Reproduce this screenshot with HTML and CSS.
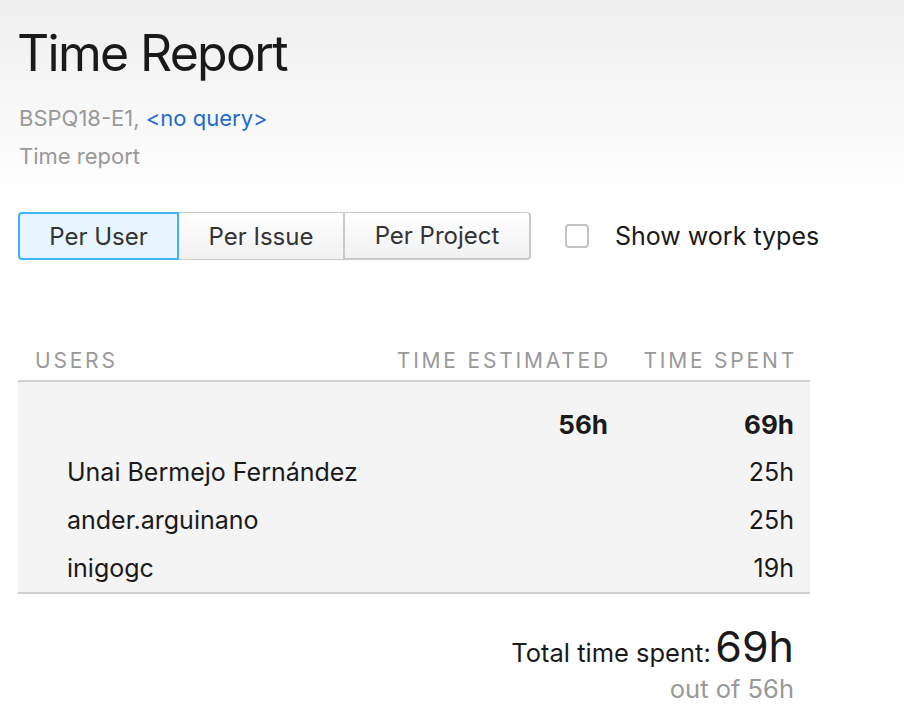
FILE: index.html
```html
<!DOCTYPE html>
<html lang="en">
<head>
<meta charset="utf-8">
<title>Time Report</title>
<link rel="stylesheet" href="styles.css">
</head>
<body>
<div class="page">
  <header class="head">
    <h1 class="title">Time Report</h1>
    <div class="meta">BSPQ18-E1, <a class="query" href="#">&lt;no query&gt;</a></div>
    <div class="sub">Time report</div>
  </header>

  <div class="controls">
    <div class="seg">
      <button class="seg-btn active">Per User</button>
      <button class="seg-btn">Per Issue</button>
      <button class="seg-btn">Per Project</button>
    </div>
    <label class="check">
      <span class="box"></span>
      <span class="check-label">Show work types</span>
    </label>
  </div>

  <div class="table">
    <div class="thead">
      <div class="th">Users</div>
      <div class="th num">Time Estimated</div>
      <div class="th num">Time Spent</div>
    </div>
    <div class="tbody">
      <div class="row total">
        <div class="cell"></div>
        <div class="cell num">56h</div>
        <div class="cell num">69h</div>
      </div>
      <div class="row">
        <div class="cell name">Unai Bermejo Fernández</div>
        <div class="cell num"></div>
        <div class="cell num">25h</div>
      </div>
      <div class="row">
        <div class="cell name">ander.arguinano</div>
        <div class="cell num"></div>
        <div class="cell num">25h</div>
      </div>
      <div class="row">
        <div class="cell name">inigogc</div>
        <div class="cell num"></div>
        <div class="cell num">19h</div>
      </div>
    </div>
  </div>

  <div class="summary">
    <div class="sum-line"><span class="sum-label">Total time spent:</span> <span class="sum-value">69h</span></div>
    <div class="sum-out">out of 56h</div>
  </div>
</div>
</body>
</html>
```

FILE: styles.css
```css
html, body {
  margin: 0;
  padding: 0;
}
body {
  font-family: Inter, "Noto Sans", "Liberation Sans", sans-serif;
  color: #1a1a1a;
  background: linear-gradient(to bottom, #efefef 0px, #ffffff 200px) no-repeat;
  background-color: #fff;
  min-height: 726px;
  white-space: nowrap;
}
.page {
  width: 792px;
  padding: 0 0 0 18px;
}
.head {
  padding-left: 1px;
  padding-top: 22px;
}
.title {
  margin: 0;
  font-size: 50px;
  font-weight: 400;
  line-height: 62px;
  letter-spacing: -1.7px;
  margin-left: -2px;
}
.meta {
  margin-top: 20px;
  font-size: 22px;
  line-height: 28px;
  color: #999;
}
.query {
  color: #1f6ad1;
  text-decoration: none;
}
.sub {
  margin-top: 10px;
  font-size: 22px;
  line-height: 28px;
  color: #999;
}
.controls {
  margin-top: 42px;
  display: flex;
  align-items: center;
  gap: 34px;
}
.seg {
  display: flex;
  flex: none;
  height: 48px;
}
.seg-btn {
  font-family: inherit;
  font-size: 24px;
  color: #333;
  background: linear-gradient(to bottom, #ffffff, #f1f1f1);
  border: 1px solid #c9c9c9;
  border-left-width: 0;
  padding: 0;
  height: 48px;
  margin: 0;
}
.seg-btn:nth-child(1) { width: 161px; border-left-width: 2px; border-radius: 4px 0 0 4px; }
.seg-btn:nth-child(2) { width: 165px; }
.seg-btn:nth-child(3) { width: 187px; border-radius: 0 4px 4px 0; border-width: 1px 2px 2px 1px; }
.seg-btn.active {
  background: #e6f5fe;
  border: 2px solid #3fb6f4;
}
.check {
  display: flex;
  flex: none;
  align-items: center;
  gap: 26px;
}
.box {
  flex: none;
  width: 20px;
  height: 20px;
  border: 2px solid #c4c4c4;
  border-radius: 4px;
  background: #fff;
}
.check-label {
  font-size: 25px;
  color: #1a1a1a;
}
.table {
  margin-top: 80px;
}
.thead, .row {
  display: grid;
  grid-template-columns: 1fr 220px 186px;
  padding-right: 16px;
}
.thead {
  height: 40px;
  align-items: center;
  border-bottom: 2px solid #cfcfcf;
}
.th {
  font-size: 21px;
  text-transform: uppercase;
  letter-spacing: 2.8px;
  color: #999;
  padding-left: 17px;
}
.th.num {
  padding-left: 0;
  margin-right: -3px;
}
.num {
  text-align: right;
}
.tbody {
  background: #f4f4f4;
  padding-top: 18px;
  border-bottom: 2px solid #cfcfcf;
}
.row {
  height: 48px;
  align-items: center;
  font-size: 25px;
}
.row.total {
  font-weight: 700;
  font-size: 26px;
}
.cell.name {
  padding-left: 49px;
}
.summary {
  width: 776px;
  text-align: right;
  margin-top: 28px;
}
.sum-label {
  font-size: 25.5px;
}
.sum-value {
  font-size: 43px;
}
.sum-line {
  line-height: 48px;
}
.sum-out {
  margin-top: -5px;
  font-size: 25.5px;
  color: #999;
  line-height: 28px;
}
```
